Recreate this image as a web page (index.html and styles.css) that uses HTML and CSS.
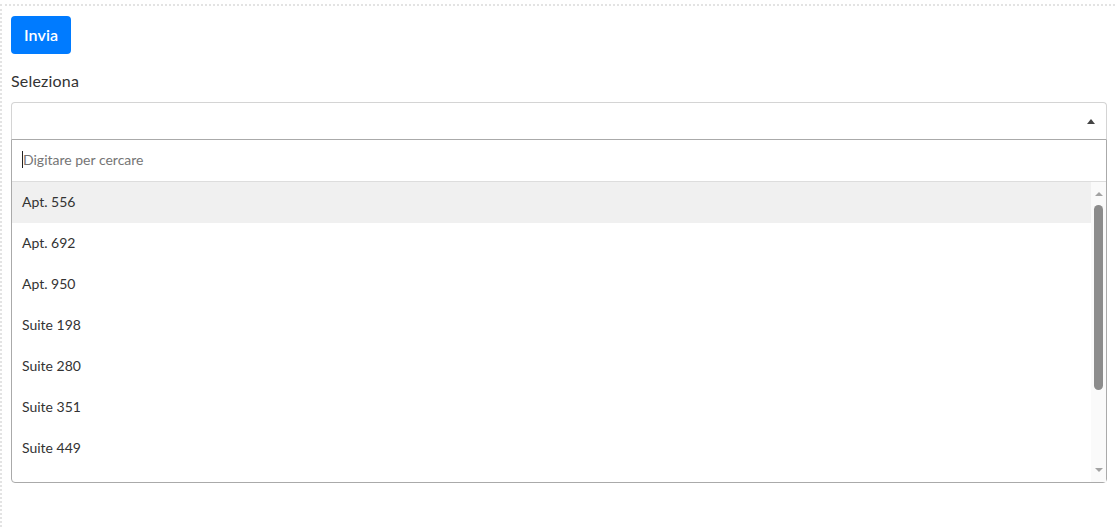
FILE: index.html
```html
<!DOCTYPE html>
<html lang="it">
<head>
<meta charset="utf-8">
<title>Seleziona</title>
<link rel="stylesheet" href="styles.css">
</head>
<body>
<div class="frame">
  <button class="btn" type="button">Invia</button>
  <label class="label">Seleziona</label>
  <div class="select">
    <div class="selection">
      <span class="arrow"></span>
    </div>
    <div class="dropdown">
      <div class="search">
        <span class="caret"></span><span class="placeholder">Digitare per cercare</span>
      </div>
      <div class="results">
        <ul class="options">
          <li class="option highlighted">Apt. 556</li>
          <li class="option">Apt. 692</li>
          <li class="option">Apt. 950</li>
          <li class="option">Suite 198</li>
          <li class="option">Suite 280</li>
          <li class="option">Suite 351</li>
          <li class="option">Suite 449</li>
        </ul>
        <div class="scrollbar">
          <span class="sb-up"></span>
          <span class="sb-thumb"></span>
          <span class="sb-space"></span>
          <span class="sb-down"></span>
        </div>
      </div>
    </div>
  </div>
</div>
</body>
</html>
```

FILE: styles.css
```css
html, body {
  margin: 0;
  padding: 0;
  background: #fff;
}
body {
  font-family: Lato, "Open Sans", sans-serif;
  color: #333;
}
.frame {
  margin-top: 4px;
  border-top: 2px dotted #e3e3e3;
  border-left: 2px dotted #e3e3e3;
  padding: 10px 8px 44px 9px;
  display: flex;
  flex-direction: column;
  align-items: flex-start;
}
.btn {
  height: 38px;
  padding: 0 13px 1px;
  border: 0;
  border-radius: 4px;
  background: #007bff;
  color: #fff;
  font-family: inherit;
  font-size: 16px;
  font-weight: 600;
  letter-spacing: 0.1px;
  margin-bottom: 15px;
}
.label {
  display: block;
  font-size: 16px;
  line-height: 24px;
  letter-spacing: 0.2px;
  color: #333;
  margin-bottom: 9px;
}
.select {
  align-self: stretch;
}
.selection {
  height: 37px;
  box-sizing: border-box;
  border: 1px solid #d4d4d4;
  border-bottom: 0;
  border-radius: 4px 4px 0 0;
  display: flex;
  align-items: center;
  justify-content: flex-end;
  padding-right: 11px;
}
.arrow {
  width: 0;
  height: 0;
  border-left: 4px solid transparent;
  border-right: 4px solid transparent;
  border-bottom: 5px solid #444;
  margin-top: 1px;
}
.dropdown {
  border: 1px solid #aaa;
  border-radius: 0 0 4px 4px;
}
.search {
  height: 42px;
  box-sizing: border-box;
  padding-bottom: 2px;
  border-bottom: 1px solid #ddd;
  display: flex;
  align-items: center;
  padding-left: 10px;
  font-size: 14px;
}
.caret {
  width: 1px;
  height: 17px;
  background: #222;
}
.placeholder {
  color: #757575;
}
.results {
  display: flex;
  height: 300px;
  overflow: hidden;
}
.options {
  list-style: none;
  margin: 0;
  padding: 0;
  flex: 1;
}
.option {
  height: 41px;
  box-sizing: border-box;
  padding-bottom: 2px;
  display: flex;
  align-items: center;
  padding-left: 10px;
  font-size: 14px;
  color: #333;
}
.option.highlighted {
  background: #f0f0f0;
}
.scrollbar {
  width: 15px;
  background: #fafafa;
  display: flex;
  flex-direction: column;
  align-items: center;
  padding: 10px 0 10px;
  box-sizing: border-box;
}
.sb-up {
  width: 0;
  height: 0;
  border-left: 4px solid transparent;
  border-right: 4px solid transparent;
  border-bottom: 4px solid #a3a3a3;
}
.sb-thumb {
  margin-top: 9px;
  width: 9px;
  height: 185px;
  border-radius: 5px;
  background: #8c8c8c;
}
.sb-space {
  flex: 1;
}
.sb-down {
  width: 0;
  height: 0;
  border-left: 4px solid transparent;
  border-right: 4px solid transparent;
  border-top: 4px solid #a3a3a3;
}
```
